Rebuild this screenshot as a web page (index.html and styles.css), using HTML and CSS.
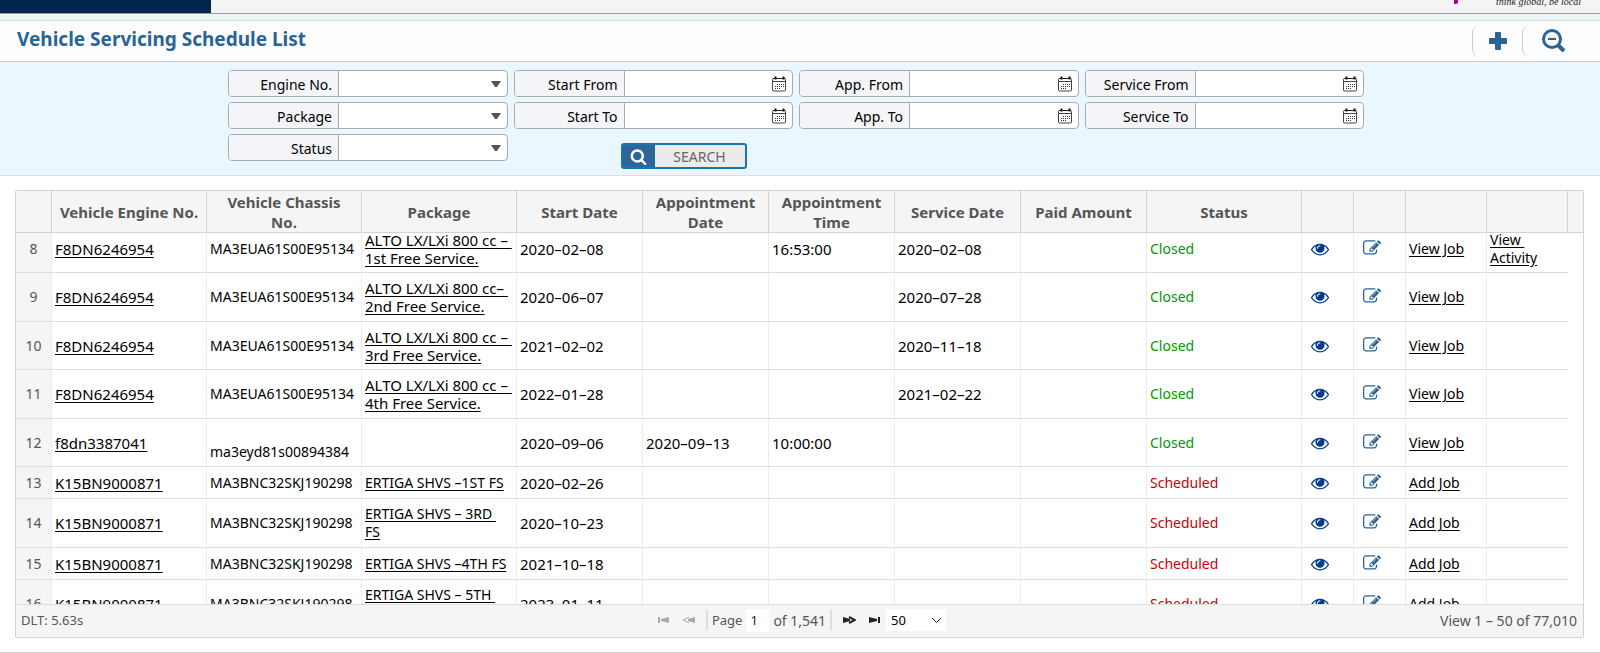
FILE: index.html
```html
<!DOCTYPE html>
<html lang="en">
<head>
    <meta charset="UTF-8">
    <meta name="viewport" content="width=device-width, initial-scale=1.0">
    <title>Vehicle Servicing Schedule List</title>
    <link rel="stylesheet" href="styles.css">
</head>
<body>
    <svg class="sprite" aria-hidden="true">
        <symbol id="i-eye" viewBox="0 0 1792 1792"><path d="M1664 960q-152-236-381-353 61 104 61 225 0 185-131.5 316.5t-316.5 131.5-316.5-131.5-131.5-316.5q0-121 61-225-229 117-381 353 133 205 333.5 326.5t434.5 121.5 434.5-121.5 333.5-326.5zm-720-384q0-20-14-34t-34-14q-125 0-214.5 89.5t-89.5 214.5q0 20 14 34t34 14 34-14 14-34q0-86 61-147t147-61q20 0 34-14t14-34zm848 384q0 34-20 69-140 230-376.5 368.5t-499.5 138.5-499.5-139-376.5-368q-20-35-20-69t20-69q140-229 376.5-368t499.5-139 499.5 139 376.5 368q20 35 20 69z"/></symbol>
        <symbol id="i-edit" viewBox="0 0 1792 1792"><path d="M888 1184l116-116-152-152-116 116v56h96v96h56zm440-720q-16-16-33 1l-350 350q-17 17-1 33t33-1l350-350q17-17 1-33zm80 594v190q0 119-84.5 203.5t-203.5 84.5h-832q-119 0-203.5-84.5t-84.5-203.5v-832q0-119 84.5-203.5t203.5-84.5h832q63 0 117 25 15 7 18 23 3 17-9 29l-49 49q-14 14-32 8-23-6-45-6h-832q-66 0-113 47t-47 113v832q0 66 47 113t113 47h832q66 0 113-47t47-113v-126q0-13 9-22l64-64q15-15 35-7t20 29zm-96-738l288 288-672 672h-288v-288zm444 132l-92 92-288-288 92-92q28-28 68-28t68 28l152 152q28 28 28 68t-28 68z"/></symbol>
        <symbol id="i-search" viewBox="0 0 1792 1792"><path d="M1216 832q0-185-131.5-316.5t-316.5-131.5-316.5 131.5-131.5 316.5 131.5 316.5 316.5 131.5 316.5-131.5 131.5-316.5zm512 832q0 52-38 90t-90 38q-54 0-90-38l-343-342q-179 124-399 124-143 0-273.5-55.5t-225-150-150-225-55.5-273.5 55.5-273.5 150-225 225-150 273.5-55.5 273.5 55.5 225 150 150 225 55.5 273.5q0 220-124 399l343 343q37 37 37 90z"/></symbol>
        <symbol id="i-cal" viewBox="0 0 14 16">
            <path d="M1.5 2.5h11q1 0 1 1v10.500q0 1-1 1h-11q-1 0-1-1V3.500q0-1 1-1z" fill="#fff" stroke="#444"/>
            <path d="M1 5.500h12" stroke="#444"/>
            <path d="M3.500 0.500v3M11.500 0.500v3" stroke="#111" stroke-width="2"/>
            <path d="M1 2.500h12" stroke="#222"/>
            <path d="M5 8.500h7M3 10.500h9M3 12.500h5" stroke="#333" stroke-dasharray="1 1"/>
        </symbol>
        <symbol id="i-down" viewBox="0 0 10 6"><path d="M0 0h10L6 6H4z"/></symbol>
    </svg>

    <header class="topbar">
        <div class="brand"></div>
        <span class="mark"></span>
        <span class="tagline">think global, be local</span>
    </header>

    <div class="titlebar">
        <h1>Vehicle Servicing Schedule List</h1>
        <button type="button" class="tool" aria-label="Add">
            <svg width="18" height="18" viewBox="0 0 18 18"><path d="M7 0h4q1 0 1 1v5h5q1 0 1 1v4q0 1-1 1h-5v5q0 1-1 1H7q-1 0-1-1v-5H1q-1 0-1-1V7q0-1 1-1h5V1q0-1 1-1z"/></svg>
        </button>
        <button type="button" class="tool tool-zoom" aria-label="Hide search">
            <svg width="24" height="24" viewBox="0 0 24 24" fill="none" stroke="#2a6496"><circle cx="10" cy="10" r="8.500" stroke-width="3"/><path d="M6 10h8" stroke-width="2"/><path d="M16.500 16.500l5.500 5.500" stroke-width="4"/></svg>
        </button>
    </div>

    <form class="filters">
        <div class="filter-grid">
            <div class="field"><label for="engine">Engine No.</label><select id="engine"><option></option></select><svg class="arrow"><use href="#i-down"/></svg></div>
            <div class="field"><label for="start-from">Start From</label><input type="text" id="start-from"><svg class="cal"><use href="#i-cal"/></svg></div>
            <div class="field"><label for="app-from">App. From</label><input type="text" id="app-from"><svg class="cal"><use href="#i-cal"/></svg></div>
            <div class="field"><label for="service-from">Service From</label><input type="text" id="service-from"><svg class="cal"><use href="#i-cal"/></svg></div>

            <div class="field"><label for="package">Package</label><select id="package"><option></option></select><svg class="arrow"><use href="#i-down"/></svg></div>
            <div class="field"><label for="start-to">Start To</label><input type="text" id="start-to"><svg class="cal"><use href="#i-cal"/></svg></div>
            <div class="field"><label for="app-to">App. To</label><input type="text" id="app-to"><svg class="cal"><use href="#i-cal"/></svg></div>
            <div class="field"><label for="service-to">Service To</label><input type="text" id="service-to"><svg class="cal"><use href="#i-cal"/></svg></div>

            <div class="field"><label for="status">Status</label><select id="status"><option></option></select><svg class="arrow"><use href="#i-down"/></svg></div>
            <button type="button" class="search"><span class="search-icon"><svg width="17" height="17"><use href="#i-search"/></svg></span><span class="search-text">SEARCH</span></button>
        </div>
    </form>

    <main class="grid">
        <div class="grid-head">
            <table>
                <colgroup><col class="c-num"><col class="c-wide" span="3"><col class="c-mid" span="5"><col class="c-wide"><col class="c-icon" span="2"><col class="c-link" span="2"></colgroup>
                <thead>
                    <tr>
                        <th></th><th>Vehicle Engine No.</th><th>Vehicle Chassis<br>No.</th><th>Package</th><th>Start Date</th><th>Appointment Date</th><th>Appointment Time</th><th>Service Date</th><th>Paid Amount</th><th>Status</th><th></th><th></th><th></th><th></th>
                    </tr>
                </thead>
            </table>
        </div>
        <div class="grid-body">
            <table>
                <colgroup><col class="c-num"><col class="c-wide" span="3"><col class="c-mid" span="5"><col class="c-wide"><col class="c-icon" span="2"><col class="c-link" span="2"></colgroup>
                <tbody>
                    <tr>
                        <td class="num">8</td><td><a href="#">F8DN6246954</a></td><td class="chassis">MA3EUA61S00E95134</td><td><a href="#">ALTO LX/LXi 800 cc –&nbsp;<br>1st Free Service.</a></td><td>2020–02–08</td><td></td><td>16:53:00</td><td>2020–02–08</td><td></td><td class="closed">Closed</td>
                        <td class="icon"><svg class="eye"><use href="#i-eye"/></svg></td><td class="icon"><svg class="edit"><use href="#i-edit"/></svg></td><td class="job"><a href="#">View Job</a></td><td class="job"><a href="#">View&nbsp;<br>Activity</a></td>
                    </tr>
                    <tr>
                        <td class="num">9</td><td><a href="#">F8DN6246954</a></td><td class="chassis">MA3EUA61S00E95134</td><td><a href="#">ALTO LX/LXi 800 cc–&nbsp;<br>2nd Free Service.</a></td><td>2020–06–07</td><td></td><td></td><td>2020–07–28</td><td></td><td class="closed">Closed</td>
                        <td class="icon"><svg class="eye"><use href="#i-eye"/></svg></td><td class="icon"><svg class="edit"><use href="#i-edit"/></svg></td><td class="job"><a href="#">View Job</a></td><td></td>
                    </tr>
                    <tr>
                        <td class="num">10</td><td><a href="#">F8DN6246954</a></td><td class="chassis">MA3EUA61S00E95134</td><td><a href="#">ALTO LX/LXi 800 cc –&nbsp;<br>3rd Free Service.</a></td><td>2021–02–02</td><td></td><td></td><td>2020–11–18</td><td></td><td class="closed">Closed</td>
                        <td class="icon"><svg class="eye"><use href="#i-eye"/></svg></td><td class="icon"><svg class="edit"><use href="#i-edit"/></svg></td><td class="job"><a href="#">View Job</a></td><td></td>
                    </tr>
                    <tr>
                        <td class="num">11</td><td><a href="#">F8DN6246954</a></td><td class="chassis">MA3EUA61S00E95134</td><td><a href="#">ALTO LX/LXi 800 cc –&nbsp;<br>4th Free Service.</a></td><td>2022–01–28</td><td></td><td></td><td>2021–02–22</td><td></td><td class="closed">Closed</td>
                        <td class="icon"><svg class="eye"><use href="#i-eye"/></svg></td><td class="icon"><svg class="edit"><use href="#i-edit"/></svg></td><td class="job"><a href="#">View Job</a></td><td></td>
                    </tr>
                    <tr>
                        <td class="num">12</td><td><a href="#">f8dn3387041</a></td><td class="chassis"><br>ma3eyd81s00894384</td><td></td><td>2020–09–06</td><td>2020–09–13</td><td>10:00:00</td><td></td><td></td><td class="closed">Closed</td>
                        <td class="icon"><svg class="eye"><use href="#i-eye"/></svg></td><td class="icon"><svg class="edit"><use href="#i-edit"/></svg></td><td class="job"><a href="#">View Job</a></td><td></td>
                    </tr>
                    <tr class="single">
                        <td class="num">13</td><td><a href="#">K15BN9000871</a></td><td class="chassis">MA3BNC32SKJ190298</td><td class="pack"><a href="#">ERTIGA SHVS –1ST FS</a></td><td>2020–02–26</td><td></td><td></td><td></td><td></td><td class="scheduled">Scheduled</td>
                        <td class="icon"><svg class="eye"><use href="#i-eye"/></svg></td><td class="icon"><svg class="edit"><use href="#i-edit"/></svg></td><td class="job"><a href="#">Add Job</a></td><td></td>
                    </tr>
                    <tr class="tall">
                        <td class="num">14</td><td><a href="#">K15BN9000871</a></td><td class="chassis">MA3BNC32SKJ190298</td><td class="pack"><a href="#">ERTIGA SHVS – 3RD&nbsp;<br>FS</a></td><td>2020–10–23</td><td></td><td></td><td></td><td></td><td class="scheduled">Scheduled</td>
                        <td class="icon"><svg class="eye"><use href="#i-eye"/></svg></td><td class="icon"><svg class="edit"><use href="#i-edit"/></svg></td><td class="job"><a href="#">Add Job</a></td><td></td>
                    </tr>
                    <tr class="single">
                        <td class="num">15</td><td><a href="#">K15BN9000871</a></td><td class="chassis">MA3BNC32SKJ190298</td><td class="pack"><a href="#">ERTIGA SHVS –4TH FS</a></td><td>2021–10–18</td><td></td><td></td><td></td><td></td><td class="scheduled">Scheduled</td>
                        <td class="icon"><svg class="eye"><use href="#i-eye"/></svg></td><td class="icon"><svg class="edit"><use href="#i-edit"/></svg></td><td class="job"><a href="#">Add Job</a></td><td></td>
                    </tr>
                    <tr>
                        <td class="num">16</td><td><a href="#">K15BN9000871</a></td><td class="chassis">MA3BNC32SKJ190298</td><td class="pack"><a href="#">ERTIGA SHVS – 5TH&nbsp;<br>FS</a></td><td>2023–01–11</td><td></td><td></td><td></td><td></td><td class="scheduled">Scheduled</td>
                        <td class="icon"><svg class="eye"><use href="#i-eye"/></svg></td><td class="icon"><svg class="edit"><use href="#i-edit"/></svg></td><td class="job"><a href="#">Add Job</a></td><td></td>
                    </tr>
                </tbody>
            </table>
        </div>
        <div class="pager">
            <span>DLT: 5.63s</span>
            <div class="pages">
                <button type="button" class="off" aria-label="First page"><svg width="12" height="8" viewBox="0 0 12 8"><path d="M0 1h2v6H0zM11 1v6L3 5V3z"/></svg></button>
                <button type="button" class="off" aria-label="Previous page"><svg width="14" height="8" viewBox="0 0 14 8"><path d="M13 1v6L6 5V3z"/><path d="M7 1L1 4l6 3" fill="none" stroke="currentColor"/></svg></button>
                <span class="sep"></span>
                <label for="page">Page</label>
                <input type="text" id="page" value="1">
                <span class="total">of 1,541</span>
                <span class="sep"></span>
                <button type="button" aria-label="Next page"><svg width="14" height="8" viewBox="0 0 14 8"><path d="M1 1v6l7-2V3z"/><path d="M7 1l6 3-6 3" fill="none" stroke="currentColor" stroke-width="2"/></svg></button>
                <button type="button" aria-label="Last page"><svg width="12" height="8" viewBox="0 0 12 8"><path d="M10 1h2v6h-2zM1 1v6l8-2V3z"/></svg></button>
                <div class="size">
                    <select aria-label="Rows per page"><option>50</option></select>
                    <svg width="11" height="7" viewBox="0 0 11 7"><path d="M1 1l4.500 4.500L10 1" fill="none" stroke="#222"/></svg>
                </div>
            </div>
            <span class="range">View 1 – 50 of 77,010</span>
        </div>
    </main>
</body>
</html>
```

FILE: styles.css
```css
* {
    box-sizing: border-box;
}
body {
    margin: 0;
    height: 100vh;
    display: flex;
    flex-direction: column;
    overflow: hidden;
    background-color: #fff;
    border-bottom: 1px solid #ccc;
    color: #000;
    font-family: "Noto Sans", "Open Sans", sans-serif;
    font-size: 14px;
}
button, input, select {
    font: inherit;
    color: inherit;
    border: none;
    border-radius: 0;
    background: none;
    margin: 0;
    padding: 0;
    appearance: none;
}
button {
    cursor: pointer;
}
.sprite {
    display: none;
}

/* top bar */
.topbar {
    display: flex;
    flex: none;
    height: 14px;
    background-color: #f4f4f4;
    border-bottom: 1px solid #999;
    padding-right: 19px;
}
.brand {
    width: 211px;
    background-color: #00264d;
}
.mark {
    width: 4px;
    height: 4px;
    margin-left: auto;
    background-color: #b5007c;
    border-radius: 0 0 2px 0;
}
.tagline {
    margin-left: 38px;
    align-self: flex-end;
    padding-bottom: 5px;
    font: italic 10px/12px "Liberation Serif", serif;
    color: #222;
}

/* title */
.titlebar {
    display: flex;
    flex: none;
    align-items: center;
    height: 42px;
    margin-top: 6px;
    padding-left: 17px;
    padding-right: 15px;
    background-color: #fdfdfd;
    border-top: 1px solid #d5d8d8;
    border-bottom: 1px solid #ccc;
    box-shadow: 0 -6px 0 #edf7f7;
}
h1 {
    flex: 1;
    margin: 0;
    padding-bottom: 4px;
    font-size: 19px;
    font-weight: 700;
    color: #2a6496;
}
.tool {
    display: flex;
    align-items: center;
    justify-content: center;
    width: 50px;
    height: 32px;
    border-left: 1px solid #ccc;
    border-radius: 8px;
    fill: #2a6496;
}
.tool-zoom {
    width: 63px;
}

/* filters */
.filters {
    flex: none;
    padding: 8px 8px 6px 0;
    background-color: #ebf7fe;
    border-bottom: 1px solid #d9e0e4;
}
.filter-grid {
    display: grid;
    grid-template-columns: repeat(4, 1fr);
    gap: 5px 6px;
    max-width: 1136px;
    margin: 0 auto;
    align-items: start;
}
.field {
    display: flex;
    align-items: center;
    height: 27px;
    padding-right: 6px;
    background-color: #fff;
    border: 1px solid #aaa;
    border-radius: 4px;
    overflow: hidden;
}
.field label {
    width: 110px;
    height: 25px;
    padding: 2px 6px 0 0;
    line-height: 24px;
    text-align: right;
    background-color: #f4f5f8;
    border-right: 1px solid #aaa;
}
.field input, .field select {
    flex: 1;
    min-width: 0;
    height: 25px;
    padding: 0 6px;
}
.arrow {
    width: 10px;
    height: 6px;
    fill: #555;
}
.cal {
    width: 14px;
    height: 16px;
}
.search {
    display: flex;
    width: 126px;
    height: 26px;
    margin: 9px 0 0 107px;
    background-color: #ebebeb;
    border: 2px solid #1678ae;
    border-radius: 3px;
    color: #666;
}
.search-icon {
    display: flex;
    align-items: center;
    justify-content: center;
    width: 32px;
    height: 22px;
    background-color: #2f6499;
    fill: #fff;
}
.search-text {
    flex: 1;
    line-height: 24px;
}

/* data grid */
.grid {
    flex: 1;
    min-height: 0;
    display: flex;
    flex-direction: column;
    margin: 14px 16px 14px 15px;
    border: 1px solid #d3d3d3;
    border-radius: 2px;
}
table {
    width: 100%;
    table-layout: fixed;
    border-collapse: separate;
    border-spacing: 0;
}
.c-num {
    width: 36px;
}
.c-wide {
    width: 155px;
}
.c-mid {
    width: 126px;
}
.c-icon {
    width: 52px;
}
.c-link {
    width: 81px;
}
.grid-head {
    flex: none;
    padding-right: 16px;
    background-color: #f5f5f5;
    border-bottom: 1px solid #d3d3d3;
}
th {
    height: 41px;
    padding: 0 4px;
    line-height: 20px;
    font-size: 15px;
    font-weight: 700;
    color: #555;
    border-right: 1px solid #d3d3d3;
}
.grid-body {
    flex: 1;
    min-height: 0;
    overflow: hidden;
    padding-right: 16px;
}
/* list is scrolled part way into row 8 */
.grid-body table {
    margin-top: -8px;
}
td {
    height: 48px;
    padding: 0 0 0 3px;
    line-height: 18px;
    font-size: 15px;
    white-space: nowrap;
    border-right: 1px solid #ececec;
    border-bottom: 1px solid #ddd;
}
td:last-child {
    border-right: none;
}
tr:nth-child(even) td, .tall td {
    height: 49px;
}
tr.single td {
    height: 32px;
}
td a {
    color: #000;
    text-decoration: underline;
    text-underline-offset: 2px;
}
td.num {
    padding: 0;
    text-align: center;
    color: #555;
    background-color: #f5f5f5;
}
td.num, td.chassis, td.pack, td.closed, td.scheduled, td.job {
    font-size: 14px;
}
.closed {
    color: #090;
}
.scheduled {
    color: #c00;
}
td.icon {
    padding-left: 9px;
}
.icon svg {
    display: block;
    width: 18px;
    height: 18px;
}
.eye {
    fill: #003b8e;
}
.icon .edit {
    fill: #2a6496;
    margin-bottom: 2px;
}

/* pager */
.pager {
    display: grid;
    grid-template-columns: 1fr auto 1fr;
    align-items: center;
    flex: none;
    height: 33px;
    padding: 0 6px 2px 5px;
    font-size: 13px;
    color: #555;
    background-color: #f5f5f5;
    border-top: 1px solid #ddd;
}
.pages {
    display: flex;
    align-items: center;
}
.pages button {
    display: flex;
    width: 25px;
    color: #222;
    fill: #222;
    justify-content: center;
}
.pages button.off {
    color: #aaa;
    fill: #aaa;
}
.sep {
    width: 2px;
    height: 20px;
    margin: 0 4px;
    background-color: #ddd;
}
.pages input {
    width: 23px;
    height: 23px;
    margin: 0 4px;
    padding-left: 4px;
    background-color: #fff;
    color: #222;
}
.total {
    font-size: 14px;
}
.size {
    display: flex;
    align-items: center;
    width: 60px;
    height: 22px;
    padding: 0 4px 0 5px;
    background-color: #fff;
    color: #000;
}
.size select {
    flex: 1;
}
.range {
    text-align: right;
    font-size: 14px;
}
```
